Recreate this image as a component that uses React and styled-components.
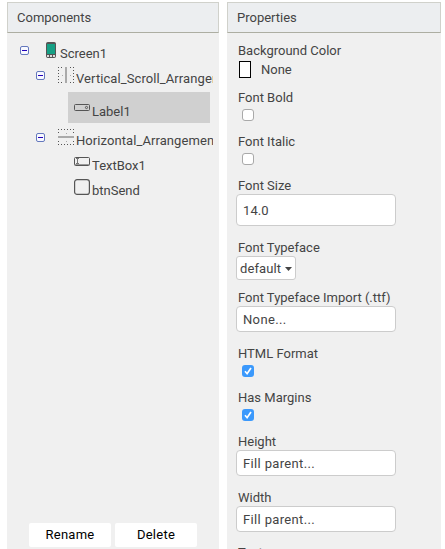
import React from 'react';
import styled, { createGlobalStyle } from 'styled-components';

const Global = createGlobalStyle`
  * { box-sizing: border-box; }
  body { margin: 0; background: #fff; overflow: hidden; }
`;
const Page = styled.div`
  display: flex;
  gap: 8px;
  height: 549px;
  padding: 2px 4px 0 7px;
  overflow: hidden;
  font: 13px/18px Roboto, sans-serif;
  color: #444;
`;
const Panel = styled.section`
  display: flex;
  flex-direction: column;
  flex: none;
  width: ${p => p.$width}px;
  height: 547px;
  background: #f0f0f0;
  overflow: hidden;
`;
const Header = styled.header`
  flex: none;
  height: 31px;
  padding: 6px 9px;
  border: 1px solid #d0d1cb;
  border-bottom-color: #adaea2;
  background: #eceef0;
`;
const Tree = styled.div`
  display: flex;
  flex-direction: column;
  padding-top: 7px;
  width: 206px;
`;
const TreeRow = styled.div`
  display: flex;
  flex: none;
  height: ${p => p.$height}px;
  margin-left: ${p => p.$indent}px;
  margin-right: 3px;
  padding-top: ${p => p.$top || 0}px;
  padding-left: ${p => p.$inset || 0}px;
  background: ${p => (p.$selected ? '#d0d0d0' : 'transparent')};
`;
const Toggle = styled.svg`
  display: block;
  flex: none;
  margin: ${p => p.$top}px ${p => p.$gap}px 0 0;
`;
const IconSlot = styled.span`
  flex: none;
  margin-top: ${p => p.$top || 0}px;
  svg { display: block; }
`;
const Label = styled.span`
  margin: ${p => p.$top || 0}px 0 0 ${p => p.$gap ?? 2}px;
  width: ${p => (p.$clip ? '137px' : 'auto')};
  flex: none;
  white-space: nowrap;
  overflow: hidden;
  letter-spacing: ${p => p.$spacing || 0}px;
`;
const Actions = styled.footer`
  display: flex;
  gap: 4px;
  margin: auto 0 2px 22px;
`;
const Button = styled.button`
  width: 82px;
  height: 24px;
  padding: 0;
  border: 0;
  border-radius: 2px;
  background: #fff;
  color: #000;
  font: 13px/24px Roboto, sans-serif;
  letter-spacing: 0.25px;
`;
const Properties = styled.div`
  display: flex;
  flex-direction: column;
  padding: 9px 9px 0;
`;
const Property = styled.div`
  flex: none;
  height: ${p => p.$height}px;
`;
const Name = styled.div`
  height: 17px;
  padding-left: 2px;
  white-space: nowrap;
`;
const ColorChoice = styled.div`
  display: flex;
  gap: 10px;
  padding: 2px 0 0 3px;
`;
const Swatch = styled.span`
  width: 12px;
  height: 17px;
  border: 1px solid #000;
  background: #fff;
`;
const Check = styled.span`
  display: block;
  width: 12px;
  height: 12px;
  margin: 3px 0 0 6px;
  border-radius: 3px;
  border: ${p => (p.$on ? '0' : '1px solid #a9a9a9')};
  background: ${p => (p.$on ? '#3b99fc' : '#fff')};
  svg { display: block; }
`;
const Field = styled.div`
  width: 160px;
  height: ${p => p.$height || 26}px;
  padding-left: 6px;
  border: 1px solid #ccc;
  border-radius: 4px;
  background: #fff;
  line-height: ${p => (p.$height || 26) - 1}px;
  letter-spacing: ${p => p.$spacing ?? 0.35}px;
`;
const Select = styled.div`
  display: flex;
  align-items: center;
  gap: 4px;
  width: 60px;
  height: 24px;
  padding: 1px 0 0 3px;
  border: 1px solid #ccc;
  border-radius: 3px;
  background: #fff;
  letter-spacing: 0.1px;
`;

const Collapse = ({ top = 0, gap }) => (
  <Toggle $top={top} $gap={gap} width="9" height="9" viewBox="0 0 9 9">
    <rect x=".5" y=".5" width="8" height="8" rx="1.5" fill="#f8f9ff" stroke="#6478bd" />
    <path d="M2 4.5h5" stroke="#2200bb" />
  </Toggle>
);
const Phone = () => (
  <svg width="11" height="16" viewBox="0 0 11 16">
    <rect x=".5" y=".5" width="9" height="15" rx="1" fill="#555" stroke="#555" />
    <path d="M1 2h8v10H1z" fill="#16a085" />
    <path d="M1 13h2v2H1zm3 0h2v2H4zm3 0h2v2H7z" fill="#ddd" />
  </svg>
);
const dots = { stroke: '#555', strokeDasharray: '1 2' };
const VerticalIcon = () => (
  <svg width="17" height="17" viewBox="0 0 17 17" fill="none">
    <path {...dots} d="M0 .5h6M0 15.5h6M.5 0v16M12 .5h4M12 15.5h4M15.5 0v16" />
    <path stroke="#aaa" d="M4 8.5h1M12 8.5h1" />
    <path stroke="#aaa" strokeWidth="2" d="M8 0v16" />
  </svg>
);
const HorizontalIcon = () => (
  <svg width="17" height="17" viewBox="0 0 17 17" fill="none">
    <path {...dots} d="M0 .5h16M0 15.5h16M.5 0v6M15.5 0v6M.5 12v4M15.5 12v4" />
    <path stroke="#aaa" d="M8 4.5h1M8 12.5h1" />
    <path stroke="#aaa" strokeWidth="2" d="M0 8h16" />
  </svg>
);
const LabelIcon = () => (
  <svg width="16" height="16" viewBox="0 0 16 16" fill="none" stroke="#555">
    <rect x=".5" y=".5" width="15" height="6" rx="1" />
    <circle cx="12.5" cy="3.5" r="1.1" />
  </svg>
);
const TextIcon = () => (
  <svg width="16" height="16" viewBox="0 0 16 16" fill="none" stroke="#555">
    <rect x=".5" y=".5" width="15" height="8" rx="1" />
    <path stroke="#999" d="M1 7.5h14" />
    <path d="M2 1.5h1.5v5H2M5 1.5H3.5M3.5 6.5H5" strokeWidth=".8" />
  </svg>
);
const ButtonIcon = () => (
  <svg width="16" height="16" viewBox="0 0 16 16" fill="none" stroke="#555">
    <rect x=".6" y=".6" width="14.8" height="14.8" rx="2.5" strokeWidth="1.2" />
  </svg>
);
const Tick = () => (
  <svg width="12" height="12" viewBox="0 0 12 12" fill="none" stroke="#fff" strokeWidth="1.7">
    <path d="M3 6.3 5.1 8.7 9 3" />
  </svg>
);

const CheckProperty = ({ name, on }) => (
  <Property $height={44}>
    <Name>{name}</Name>
    <Check $on={on}>{on && <Tick />}</Check>
  </Property>
);

export default function App() {
  return (
    <>
      <Global />
      <Page>
        <Panel $width={212}>
          <Header>Components</Header>
          <Tree>
            <TreeRow $height={26} $indent={13}>
              <Collapse top={6} gap={17} />
              <IconSlot $top={2}><Phone /></IconSlot>
              <Label $top={5} $gap={3}>Screen1</Label>
            </TreeRow>
            <TreeRow $height={26} $indent={29}>
              <Collapse top={5} gap={13} />
              <IconSlot $top={1}><VerticalIcon /></IconSlot>
              <Label $top={4} $gap={1} $clip $spacing={0.09}>Vertical_Scroll_Arrangement1</Label>
            </TreeRow>
            <TreeRow $height={31} $indent={61} $inset={6} $top={11} $selected>
              <IconSlot $top={1}><LabelIcon /></IconSlot>
              <Label>Label1</Label>
            </TreeRow>
            <TreeRow $height={30} $indent={29}>
              <Collapse top={10} gap={13} />
              <IconSlot $top={6}><HorizontalIcon /></IconSlot>
              <Label $top={9} $gap={1} $clip $spacing={0.08}>Horizontal_Arrangement1</Label>
            </TreeRow>
            <TreeRow $height={25} $indent={67} $top={4}>
              <IconSlot><TextIcon /></IconSlot>
              <Label>TextBox1</Label>
            </TreeRow>
            <TreeRow $height={25} $indent={67} $top={1}>
              <IconSlot><ButtonIcon /></IconSlot>
              <Label $top={3}>btnSend</Label>
            </TreeRow>
          </Tree>
          <Actions>
            <Button>Rename</Button>
            <Button>Delete</Button>
          </Actions>
        </Panel>
        <Panel $width={214}>
          <Header>Properties</Header>
          <Properties>
            <Property $height={47}>
              <Name>Background Color</Name>
              <ColorChoice><Swatch />None</ColorChoice>
            </Property>
            <CheckProperty name="Font Bold" />
            <CheckProperty name="Font Italic" />
            <Property $height={62}>
              <Name>Font Size</Name>
              <Field $height={32} $spacing={0.1}>14.0</Field>
            </Property>
            <Property $height={50}>
              <Name>Font Typeface</Name>
              <Select>
                default
                <svg width="7" height="4" viewBox="0 0 7 4"><path d="M0 0h7L3.5 4z" fill="#444" /></svg>
              </Select>
            </Property>
            <Property $height={56}>
              <Name>Font Typeface Import (.ttf)</Name>
              <Field>None...</Field>
            </Property>
            <CheckProperty name="HTML Format" on />
            <CheckProperty name="Has Margins" on />
            <Property $height={56}>
              <Name>Height</Name>
              <Field>Fill parent...</Field>
            </Property>
            <Property $height={55}>
              <Name>Width</Name>
              <Field>Fill parent...</Field>
            </Property>
            <Property $height={56}>
              <Name>Text</Name>
            </Property>
          </Properties>
        </Panel>
      </Page>
    </>
  );
}
